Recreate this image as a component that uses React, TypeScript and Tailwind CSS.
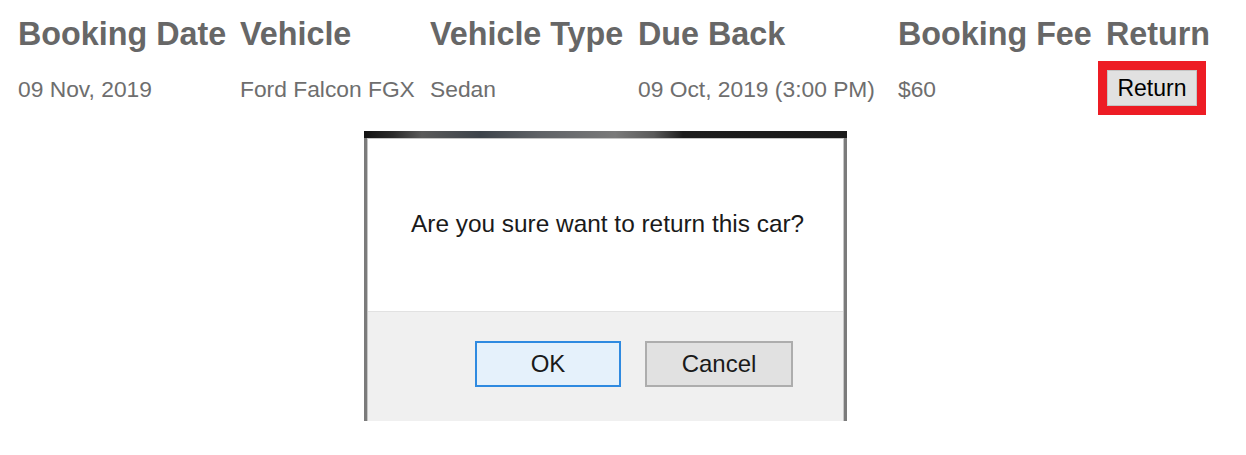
import React from "react";

const rows = [
  {
    date: "09 Nov, 2019",
    vehicle: "Ford Falcon FGX",
    type: "Sedan",
    due: "09 Oct, 2019 (3:00 PM)",
    fee: "$60",
  },
];

export default function App() {
  return (
    <div
      className="w-[1246px] h-[455px] bg-white overflow-hidden"
      style={{ fontFamily: '"Liberation Sans", Arial, sans-serif' }}
    >
      {/* Table */}
      <div className="pl-[18px] pt-[16px]">
        <div className="grid grid-cols-[222px_190px_208px_260px_208px_1fr] text-[32.3px] leading-[37px] font-bold text-[#676767] whitespace-nowrap">
          <div>Booking Date</div>
          <div>Vehicle</div>
          <div>Vehicle Type</div>
          <div>Due Back</div>
          <div>Booking Fee</div>
          <div>Return</div>
        </div>
        {rows.map((r) => (
          <div
            key={r.date}
            className="mt-[8px] h-[54px] grid grid-cols-[222px_190px_208px_260px_208px_1fr] items-center text-[22.8px] text-[#6e6e6e] whitespace-nowrap"
          >
            <div className="pt-[2px]">{r.date}</div>
            <div className="pt-[2px]">{r.vehicle}</div>
            <div className="pt-[2px]">{r.type}</div>
            <div className="pt-[2px]">{r.due}</div>
            <div className="pt-[2px]">{r.fee}</div>
            <div>
              <div className="ml-[-8px] w-[108px] h-[54px] border-[9px] border-[#ed1c24] flex">
                <button className="flex-1 bg-[#e1e1e1] border border-[#c4c4c4] text-[23px] text-black leading-none">
                  Return
                </button>
              </div>
            </div>
          </div>
        ))}
      </div>

      {/* Confirm dialog */}
      <div className="ml-[364px] mt-[16px] w-[483px]">
        <div className="h-[7px] bg-[linear-gradient(90deg,#121212_0%,#2a2a2a_6%,#5a5a5a_12%,#3d434a_24%,#5f6266_36%,#7a7a7a_52%,#5a5a5a_60%,#1c1c1c_66%,#1a1a1a_100%)]" />
        <div className="border-x-[3px] border-[#7b7b7b]">
          <div className="border-x border-t border-[#c6c6c6]">
            <div className="bg-white h-[172px] pt-[71px] pl-[43px]">
              <p className="text-[24.4px] leading-[28px] text-[#1a1a1a]">
                Are you sure want to return this car?
              </p>
            </div>
            <div className="bg-[#f0f0f0] border-t border-[#e2e2e2] h-[110px] pt-[29px] pr-[50px] flex justify-end gap-[24px]">
              <button className="w-[146px] h-[46px] bg-[#e5f1fb] border-2 border-[#2f8ae0] text-[24px] text-[#1a1a1a] leading-none">
                OK
              </button>
              <button className="w-[148px] h-[46px] bg-[#e1e1e1] border-2 border-[#adadad] text-[24px] text-[#1a1a1a] leading-none">
                Cancel
              </button>
            </div>
          </div>
        </div>
      </div>
    </div>
  );
}
